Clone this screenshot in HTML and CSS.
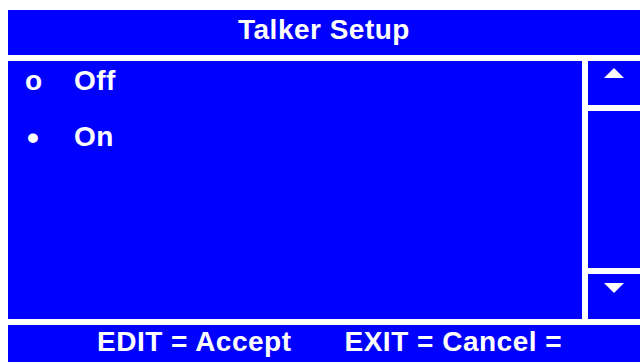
FILE: index.html
```html
<!DOCTYPE html>
<html lang="en">
<head>
    <meta charset="UTF-8">
    <meta name="viewport" content="width=device-width, initial-scale=1.0">
    <title>Talker Setup</title>
    <link rel="stylesheet" href="styles.css">
</head>
<body>
    <div class="screen">
        <div class="title">Talker Setup</div>

        <div class="main">
            <ul class="options">
                <li><span class="mark">o</span><span>Off</span></li>
                <li><span class="mark dot">&bull;</span><span>On</span></li>
            </ul>
            <div class="scroll">
                <div class="btn up"><span class="arrow-up"></span></div>
                <div class="track"></div>
                <div class="btn down"><span class="arrow-down"></span></div>
            </div>
        </div>

        <div class="footer">
            <span>EDIT = Accept</span>
            <span>EXIT = Cancel =</span>
        </div>
    </div>
</body>
</html>
```

FILE: styles.css
```css
body {
    margin: 0;
    background: #fff;
    font-family: "Liberation Sans", Arial, sans-serif;
    font-weight: bold;
    font-size: 28px;
    letter-spacing: 0.5px;
    color: #fff;
    overflow: hidden;
}
.screen {
    height: 362px;
    padding: 10px 0 0 8px;
    box-sizing: border-box;
    display: flex;
    flex-direction: column;
    gap: 6px;
}
.title {
    background: #0000ff;
    height: 45px;
    box-sizing: border-box;
    line-height: 39px;
    padding-bottom: 6px;
    text-align: center;
}
.main {
    height: 258px;
    display: flex;
    gap: 6px;
}
.options {
    flex: 1;
    margin: 0;
    padding: 0 0 0 17px;
    list-style: none;
    background: #0000ff;
    display: flex;
    flex-direction: column;
    gap: 16px;
}
.options li {
    display: flex;
    height: 40px;
    line-height: 40px;
}
.mark {
    width: 49px;
}
.dot {
    font-size: 34px;
    padding-left: 2px;
    width: 47px;
}
.scroll {
    width: 52px;
    display: flex;
    flex-direction: column;
    gap: 6px;
}
.btn, .track {
    background: #0000ff;
}
.btn {
    display: flex;
    justify-content: center;
    box-sizing: border-box;
}
.up {
    height: 44px;
    padding-top: 7px;
}
.down {
    height: 45px;
    padding-top: 9px;
}
.track {
    flex: 1;
}
.arrow-up, .arrow-down {
    width: 0;
    height: 0;
    border-left: 10px solid transparent;
    border-right: 10px solid transparent;
}
.arrow-up {
    border-bottom: 10px solid #fff;
}
.arrow-down {
    border-top: 10px solid #fff;
}
.footer {
    background: #0000ff;
    height: 37px;
    box-sizing: border-box;
    line-height: 33px;
    padding-left: 89px;
    display: flex;
    gap: 53px;
}
```
